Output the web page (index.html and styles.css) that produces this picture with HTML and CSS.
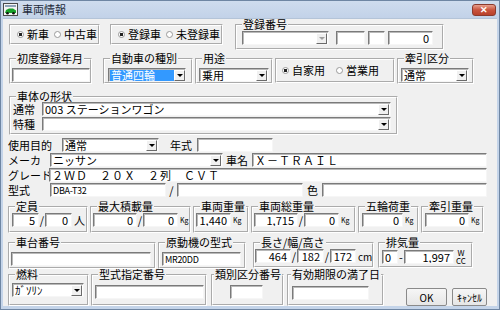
FILE: index.html
```html
<!DOCTYPE html>
<html lang="ja">
<head>
  <meta charset="UTF-8" />
  <title>車両情報</title>
  <link rel="stylesheet" href="styles.css">
</head>
<body>
  <div class="window">
    <div class="titlebar">
      <svg class="app-icon" width="15" height="13" viewBox="0 0 15 13">
        <rect x="0.5" y="0.5" width="14" height="12" fill="#f4f4f4" stroke="#4a4a4a"/>
        <rect x="2" y="2" width="11" height="2" fill="#8fa3b8"/>
        <path d="M2 10 L3 7 L6 5.5 L10 5.5 L13 7.5 L13 10 Z" fill="#17a02a"/>
        <circle cx="4.5" cy="10.3" r="1.3" fill="#111"/>
        <circle cx="10.5" cy="10.3" r="1.3" fill="#111"/>
      </svg>
      <span class="title">車両情報</span>
      <span class="close">✕</span>
    </div>

    <div class="client">
      <!-- row 1 -->
      <div class="row row-1">
        <div class="box box-new">
          <span class="radio on"></span><span class="rlabel">新車</span>
          <span class="radio"></span><span class="rlabel">中古車</span>
        </div>
        <div class="box box-reg">
          <span class="radio on"></span><span class="rlabel">登録車</span>
          <span class="radio"></span><span class="rlabel">未登録車</span>
        </div>
        <fieldset class="group g-regno">
          <legend>登録番号</legend>
          <div class="body">
            <div class="combo disabled regno-combo"><span class="text"></span><span class="drop"></span></div>
            <div class="edit regno-a"></div>
            <div class="edit regno-b"></div>
            <div class="edit num regno-c">0</div>
          </div>
        </fieldset>
      </div>

      <!-- row 2 -->
      <div class="row row-2">
        <fieldset class="group g-first">
          <legend>初度登録年月</legend>
          <div class="body"><div class="edit first-edit"></div></div>
        </fieldset>
        <fieldset class="group g-kind">
          <legend>自動車の種別</legend>
          <div class="body">
            <div class="combo kind-combo"><span class="text selected">普通四輪</span><span class="drop"></span></div>
          </div>
        </fieldset>
        <fieldset class="group g-use">
          <legend>用途</legend>
          <div class="body">
            <div class="combo use-combo"><span class="text">乗用</span><span class="drop"></span></div>
          </div>
        </fieldset>
        <div class="box box-own">
          <span class="radio on"></span><span class="rlabel">自家用</span>
          <span class="radio"></span><span class="rlabel">営業用</span>
        </div>
        <fieldset class="group g-tow">
          <legend>牽引区分</legend>
          <div class="body">
            <div class="combo tow-combo"><span class="text">通常</span><span class="drop"></span></div>
          </div>
        </fieldset>
      </div>

      <!-- row 3 -->
      <div class="row row-3">
        <fieldset class="group g-body">
          <legend>車体の形状</legend>
          <div class="body stack">
            <div class="line">
              <span class="lbl body-lbl">通常</span>
              <div class="combo body-combo"><span class="text">003 ステーションワゴン</span><span class="drop"></span></div>
            </div>
            <div class="line">
              <span class="lbl body-lbl">特種</span>
              <div class="combo body-combo"><span class="text"></span><span class="drop"></span></div>
            </div>
          </div>
        </fieldset>
      </div>

      <!-- plain lines -->
      <div class="row line-row first-line">
        <span class="lbl purpose-lbl">使用目的</span>
        <div class="combo purpose-combo"><span class="text">通常</span><span class="drop"></span></div>
        <span class="lbl year-lbl">年式</span>
        <div class="edit year-edit"></div>
      </div>
      <div class="row line-row">
        <span class="lbl maker-lbl">メーカ</span>
        <div class="combo maker-combo"><span class="text">ニッサン</span><span class="drop"></span></div>
        <span class="lbl name-lbl">車名</span>
        <div class="edit name-edit wide-text">Ｘ－ＴＲＡＩＬ</div>
      </div>
      <div class="row line-row">
        <span class="lbl grade-lbl">グレード</span>
        <div class="edit grade-edit wide-text">２ＷＤ　２０Ｘ　２列　ＣＶＴ</div>
      </div>
      <div class="row line-row">
        <span class="lbl model-lbl">型式</span>
        <div class="edit model-edit small-text">DBA-T32</div>
        <span class="sep model-sep">/</span>
        <div class="edit model-edit2"></div>
        <span class="lbl color-lbl">色</span>
        <div class="edit color-edit"></div>
      </div>

      <!-- row 8 -->
      <div class="row row-8">
        <fieldset class="group g-cap">
          <legend>定員</legend>
          <div class="body">
            <div class="edit num cap-a">5</div>
            <span class="sep">/</span>
            <div class="edit num cap-b">0</div>
            <span class="unit-jp">人</span>
          </div>
        </fieldset>
        <fieldset class="group g-load">
          <legend>最大積載量</legend>
          <div class="body">
            <div class="edit num load-a">0</div>
            <span class="sep">/</span>
            <div class="edit num load-b">0</div>
            <span class="kg">Kg</span>
          </div>
        </fieldset>
        <fieldset class="group g-weight">
          <legend>車両重量</legend>
          <div class="body">
            <div class="edit num weight-a">1,440</div>
            <span class="kg">Kg</span>
          </div>
        </fieldset>
        <fieldset class="group g-gross">
          <legend>車両総重量</legend>
          <div class="body">
            <div class="edit num gross-a">1,715</div>
            <span class="sep">/</span>
            <div class="edit num gross-b">0</div>
            <span class="kg">Kg</span>
          </div>
        </fieldset>
        <fieldset class="group g-fifth">
          <legend>五輪荷重</legend>
          <div class="body">
            <div class="edit num fifth-a">0</div>
            <span class="kg">Kg</span>
          </div>
        </fieldset>
        <fieldset class="group g-towwt">
          <legend>牽引重量</legend>
          <div class="body">
            <div class="edit num towwt-a">0</div>
            <span class="kg">Kg</span>
          </div>
        </fieldset>
      </div>

      <!-- row 9 -->
      <div class="row row-9">
        <fieldset class="group g-chassis">
          <legend>車台番号</legend>
          <div class="body"><div class="edit chassis-edit"></div></div>
        </fieldset>
        <fieldset class="group g-engine">
          <legend>原動機の型式</legend>
          <div class="body"><div class="edit engine-edit small-text">MR20DD</div></div>
        </fieldset>
        <fieldset class="group g-size">
          <legend>長さ/幅/高さ</legend>
          <div class="body">
            <div class="edit num size-a">464</div>
            <span class="sep">/</span>
            <div class="edit num size-b">182</div>
            <span class="sep">/</span>
            <div class="edit num size-c">172</div>
            <span class="cm">cm</span>
          </div>
        </fieldset>
        <fieldset class="group g-disp">
          <legend>排気量</legend>
          <div class="body">
            <div class="edit disp-a">0</div>
            <span class="dash">-</span>
            <div class="edit num disp-b">1,997</div>
            <span class="wcc"><span>W</span><span>CC</span></span>
          </div>
        </fieldset>
      </div>

      <!-- row 10 -->
      <div class="row row-10">
        <fieldset class="group g-fuel">
          <legend>燃料</legend>
          <div class="body">
            <div class="combo fuel-combo"><span class="text">ｶﾞｿﾘﾝ</span><span class="drop"></span></div>
          </div>
        </fieldset>
        <fieldset class="group g-designation">
          <legend>型式指定番号</legend>
          <div class="body"><div class="edit designation-edit"></div></div>
        </fieldset>
        <fieldset class="group g-class">
          <legend>類別区分番号</legend>
          <div class="body"><div class="edit class-edit"></div></div>
        </fieldset>
        <fieldset class="group g-expire">
          <legend>有効期限の満了日</legend>
          <div class="body"><div class="edit expire-edit"></div></div>
        </fieldset>
        <button class="btn ok-btn">OK</button>
        <button class="btn cancel-btn">ｷｬﾝｾﾙ</button>
      </div>
    </div>
  </div>
</body>
</html>
```

FILE: styles.css
```css
* {
  box-sizing: border-box;
  margin: 0;
  padding: 0;
}

body {
  font-family: "Noto Sans CJK JP", "Noto Sans", sans-serif;
  font-size: 11px;
  line-height: 11px;
  color: #000;
  background: #fff;
}

.window {
  width: 500px;
  height: 310px;
  background: #c4d4e9;
  border: 1px solid #6f86a3;
  display: flex;
  flex-direction: column;
}

/* title bar */

.titlebar {
  height: 17px;
  display: flex;
  align-items: center;
  padding: 0 3px 0 2px;
  background: linear-gradient(#cfdcee, #c2d2e8);
}

.app-icon {
  margin-right: 4px;
}

.title {
  font-size: 11px;
  color: #1d2a3a;
}

.close {
  margin-left: auto;
  width: 24px;
  height: 12px;
  border-radius: 3px;
  border: 1px solid #8b3a2d;
  background: linear-gradient(#e8a08e, #c9533d 50%, #b8412b);
  color: #fff;
  font-size: 9px;
  line-height: 10px;
  text-align: center;
  font-weight: bold;
}

/* client area */

.client {
  flex: 1;
  margin: 0 2px 3px 2px;
  background: #f0f0f0;
  border-top: 1px solid #b4c4d8;
  padding-left: 5px;
}

.row {
  display: flex;
  align-items: flex-start;
}

/* etched group boxes */

.group {
  border: 2px groove #fff;
  min-width: 0;
  flex-shrink: 0;
}

.group legend {
  margin-left: 5px;
  padding: 0 1px;
  line-height: 11px;
  font-size: 11px;
  white-space: nowrap;
}

.group .body {
  display: flex;
  align-items: center;
}

.box {
  border: 2px groove #fff;
  display: flex;
  align-items: center;
  flex-shrink: 0;
}

/* radio buttons */

.radio {
  flex-shrink: 0;
  width: 7px;
  height: 7px;
  border-radius: 50%;
  border: 1px solid #9a9a9a;
  background: #fff;
  margin-left: 5px;
  margin-right: 3px;
}

.radio.on {
  background: radial-gradient(circle, #222 0 1.5px, #fff 2px);
}

.rlabel {
  white-space: nowrap;
}

/* edit boxes and combos */

.edit,
.combo {
  flex-shrink: 0;
  height: 14px;
  background: #fff;
  border: 1px solid;
  border-color: #7a7a7a #f6f6f6 #f6f6f6 #7a7a7a;
  box-shadow: inset 1px 1px 0 #b9b9b9;
}

.edit {
  padding: 1px 2px 0;
  white-space: nowrap;
  overflow: hidden;
}

.edit.num {
  text-align: right;
  padding-right: 3px;
}

.combo {
  display: flex;
  align-items: center;
  padding: 1px;
}

.combo .text {
  flex: 1;
  height: 11px;
  padding-left: 1px;
  white-space: nowrap;
}

.combo .text.selected {
  flex: 0 0 auto;
  width: 64px;
  background: #3399ff;
  color: #fff;
  margin-right: auto;
}

.combo .drop {
  flex-shrink: 0;
  width: 11px;
  height: 11px;
  background: #f0f0f0;
  border: 1px solid;
  border-color: #fff #6a6a6a #6a6a6a #fff;
  display: flex;
  align-items: center;
  justify-content: center;
}

.combo .drop::after {
  content: "";
  border-left: 3px solid transparent;
  border-right: 3px solid transparent;
  border-top: 3px solid #000;
}

.combo.disabled .drop::after {
  border-top-color: #a0a0a0;
}

.wide-text {
  letter-spacing: 1px;
}

.small-text {
  font-size: 9px;
  letter-spacing: -0.3px;
}

.lbl {
  white-space: nowrap;
  flex-shrink: 0;
}

.sep {
  flex-shrink: 0;
  width: 6px;
  text-align: center;
}

.kg {
  font-size: 7px;
  margin-left: 2px;
}

.unit-jp {
  margin-left: 2px;
}

.cm {
  margin-left: 2px;
  font-size: 10px;
}

.dash {
  width: 6px;
  text-align: center;
}

.wcc {
  display: flex;
  flex-direction: column;
  align-items: center;
  font-size: 8px;
  line-height: 8px;
  margin-left: 2px;
}

/* row 1 */

.row-1 {
  margin-top: 0;
  height: 31px;
}

.box-new {
  margin-left: 1px;
  margin-top: 5px;
  width: 91px;
  height: 21px;
}

.box-reg {
  margin-left: 10px;
  margin-top: 5px;
  width: 113px;
  height: 21px;
}

.box-new .radio:first-child,
.box-reg .radio:first-child {
  margin-left: 6px;
}

.g-regno {
  margin-left: 12px;
  width: 209px;
  height: 31px;
}

.g-regno .body {
  padding: 1px 0 0 5px;
}

.regno-combo { width: 87px; }
.regno-a { width: 29px; margin-left: 7px; }
.regno-b { width: 17px; margin-left: 3px; }
.regno-c { width: 45px; margin-left: 3px; }

/* row 2 */

.row-2 {
  margin-top: 3px;
  height: 31px;
}

.row-2 .group {
  height: 31px;
}

.row-2 .body {
  padding-top: 4px;
}

.g-first { margin-left: 1px; width: 83px; }
.g-first .body { padding-left: 1px; }
.first-edit { width: 78px; }

.g-kind { margin-left: 11px; width: 90px; }
.g-kind .body { padding-left: 3px; }
.kind-combo { width: 78px; }

.g-use { margin-left: 2px; width: 78px; }
.g-use .body { padding-left: 2px; }
.use-combo { width: 70px; }

.box-own {
  margin-left: 2px;
  margin-top: 5px;
  width: 120px;
  height: 25px;
}

.box-own .radio:first-child {
  margin-left: 5px;
}

.box-own .radio:nth-child(3) {
  margin-left: 11px;
}

.g-tow { margin-left: 2px; width: 77px; }
.g-tow .body { padding-left: 2px; }
.tow-combo { width: 68px; }

/* row 3 */

.row-3 {
  margin-top: 7px;
}

.g-body {
  margin-left: 1px;
  width: 389px;
  height: 44px;
}

.g-body .body.stack {
  flex-direction: column;
  align-items: stretch;
  gap: 1px;
}

.g-body .line {
  display: flex;
  align-items: center;
}

.body-lbl {
  width: 31px;
  padding-left: 2px;
}

.body-combo { width: 349px; }

/* single lines */

.line-row {
  height: 14px;
  margin-top: 1px;
  align-items: center;
}

.first-line {
  margin-top: 3px;
}

.purpose-lbl { width: 54px; }
.purpose-combo { width: 97px; }
.year-lbl { margin-left: 11px; width: 27px; }
.year-edit { width: 76px; }

.maker-lbl { width: 42px; }
.maker-combo { width: 173px; }
.name-lbl { margin-left: 3px; width: 26px; }
.name-edit { width: 235px; }

.grade-lbl { width: 41px; }
.grade-edit { width: 438px; }

.model-lbl { width: 42px; }
.model-edit { width: 116px; }
.model-sep { width: 11px; }
.model-edit2 { width: 126px; }
.color-lbl { width: 19px; text-align: center; }
.color-edit { width: 165px; }

/* row 8 */

.row-8 {
  margin-top: 4px;
}

.row-8 .group {
  height: 32px;
  margin-left: 2px;
}

.row-8 .body {
  padding-top: 1px;
}

.g-cap { margin-left: 0 !important; width: 80px; }
.g-cap .body { padding-left: 2px; }
.cap-a, .cap-b { width: 27px; }

.g-load { width: 101px; }
.g-load .body { padding-left: 1px; }
.load-a { width: 44px; }
.load-b { width: 35px; }

.g-weight { width: 56px; }
.g-weight .body { padding-left: 1px; }
.weight-a { width: 35px; }

.g-gross { width: 105px; }
.g-gross .body { padding-left: 1px; }
.gross-a { width: 44px; }
.gross-b { width: 35px; }

.g-fifth { width: 61px; }
.g-fifth .body { padding-left: 2px; }
.fifth-a { width: 41px; }

.g-towwt { width: 63px; }
.g-towwt .body { padding-left: 2px; }
.towwt-a { width: 44px; }

/* row 9 */

.row-9 {
  margin-top: 4px;
  height: 32px;
}

.row-9 .group {
  height: 32px;
}

.row-9 .body {
  padding-top: 4px;
}

.g-chassis { width: 148px; }
.g-chassis .body { padding-left: 1px; }
.chassis-edit { width: 140px; }

.g-engine { margin-left: 2px; width: 88px; }
.g-engine .body { padding-left: 2px; }
.engine-edit { width: 79px; }

.row-9 .g-size,
.row-9 .g-disp {
  height: 31px;
}

.row-9 .g-size .body,
.row-9 .g-disp .body {
  padding-top: 1px;
}

.g-size { margin-left: 7px; width: 121px; }
.g-size .body { padding-left: 0; }
.size-a { width: 36px; }
.size-b { width: 27px; }
.size-c { width: 26px; }

.g-disp { margin-left: 4px; width: 95px; }
.g-disp .body { padding-left: 2px; }
.disp-a { width: 16px; }
.disp-b { width: 50px; }

/* row 10 */

.row-10 .group {
  height: 37px;
}

.row-10 .body {
  padding-top: 3px;
}

.g-fuel { width: 81px; }
.g-fuel .body { padding-left: 2px; }
.fuel-combo { width: 72px; }

.g-designation { margin-left: 2px; width: 116px; }
.g-designation .body { padding-left: 2px; padding-top: 5px; }
.designation-edit { width: 109px; }

.g-class { margin-left: 4px; width: 73px; }
.g-class legend { margin-left: 1px; }
.g-class .body { padding-left: 17px; padding-top: 5px; }
.class-edit { width: 33px; }

.g-expire { margin-left: 3px; width: 97px; }
.g-expire legend { margin-left: 2px; }
.g-expire .body { padding-left: 3px; padding-top: 6px; }
.expire-edit { width: 77px; }

.btn {
  margin-top: 19px;
  height: 18px;
  font-family: inherit;
  font-size: 10px;
  background: linear-gradient(#f6f6f6, #e6e6e6);
  border: 1px solid #8a8a8a;
  border-radius: 2px;
  color: #000;
}

.ok-btn { margin-left: 22px; width: 41px; }
.cancel-btn { margin-left: 5px; width: 35px; }
```
